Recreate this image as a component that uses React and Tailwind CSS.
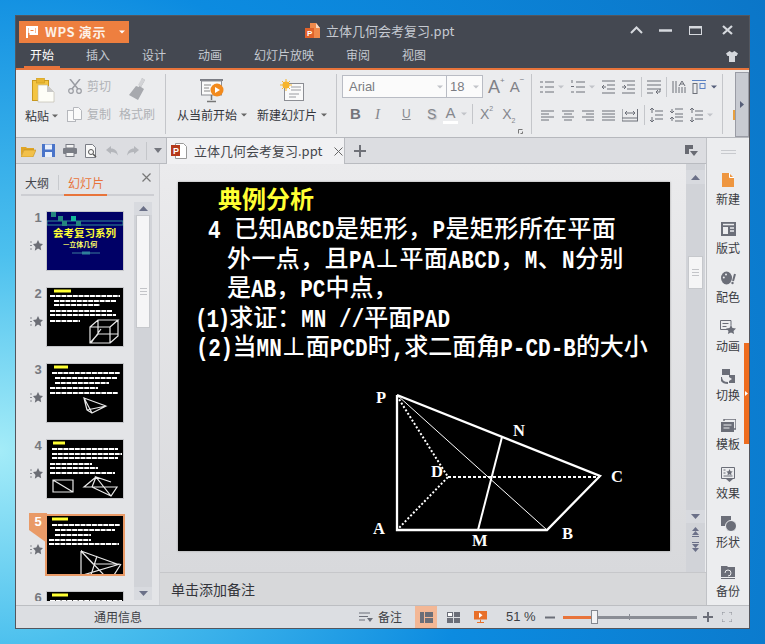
import React from "react";

const G = "#6d7079";
const cjk = "font-['Noto_Sans_CJK_SC','Liberation_Sans',sans-serif]";

function Sv({ w, h, className = "", children }) {
  return (
    <svg width={w} height={h} viewBox={`0 0 ${w} ${h}`} className={"block shrink-0 " + className}>
      {children}
    </svg>
  );
}

function Ln({ w = 14, h = 14, d, c = G, sw = 1, className = "" }) {
  return (
    <Sv w={w} h={h} className={className}>
      <path d={d} stroke={c} strokeWidth={sw} fill="none" />
    </Sv>
  );
}

function Caret({ c = "#c2c4c9", className = "" }) {
  return (
    <Sv w={6} h={4} className={className}>
      <path d="M0 0.5h6L3 3.5z" fill={c} />
    </Sv>
  );
}

function Sep({ className = "" }) {
  return <div className={"w-px bg-[#c4c6ca] shrink-0 " + className} />;
}

function Titlebar() {
  return (
    <div className="h-[28px] bg-[#444851] flex items-center relative shrink-0">
      <div className="ml-[3px] mt-[3px] w-[110px] h-[22px] bg-[#ee7f3f] flex items-center text-white">
        <Sv w={12} h={12} className="ml-[7px]">
          <path d="M1 12V1h10v7H3.5M3.5 3v3h5V3z" fill="none" stroke="#fff" strokeWidth="2" />
        </Sv>
        <span className={`ml-[7px] text-[13px] font-bold tracking-[0.6px] text-[#fdf0e6] ${cjk}`}>WPS 演示</span>
        <Caret c="#fff" className="ml-[13px]" />
      </div>
      <div className="ml-[176px] mt-[1px] flex items-center">
        <Sv w={15} h={15}>
          <path d="M5 0h6l4 5v10H5z" fill="#f08a4b" />
          <path d="M11 0l4 5h-4z" fill="#fbd9c2" />
          <rect x="0" y="5" width="9" height="10" fill="#e0622a" />
          <text x="2" y="13" fontSize="8" fontWeight="700" fill="#fff" fontFamily="Liberation Sans">P</text>
        </Sv>
        <span className={`ml-[6px] text-[13px] leading-[18px] text-[#c6cad1] ${cjk}`}>立体几何会考复习.ppt</span>
      </div>
      <div className="ml-auto flex items-center mr-[16px]">
        <Ln w={13} h={8} d="M1 7l5.5-5.5L12 7" c="#d6d9de" sw={2} />
        <Ln w={13} h={3} d="M0 1.5h13" c="#d6d9de" sw={2.5} className="ml-[16px]" />
        <Sv w={13} h={9} className="ml-[17px]">
          <rect x="0.5" y="0.5" width="12" height="8" fill="none" stroke="#d6d9de" />
          <rect x="0" y="0" width="13" height="2.5" fill="#d6d9de" />
        </Sv>
        <Ln w={11} h={10} d="M1 1l9 8M10 1L1 9" c="#d6d9de" sw={2.2} className="ml-[20px]" />
      </div>
    </div>
  );
}

function Tabs() {
  const tabs = ["开始", "插入", "设计", "动画", "幻灯片放映", "审阅", "视图"];
  return (
    <div className="h-[26px] shrink-0 bg-[#444851] border-b-2 border-[#e8743b] flex items-end pl-[8px] relative">
      {tabs.map((t, i) => (
        <div
          key={t}
          className={
            `mr-[20px] px-[6px] h-[24px] pt-[2px] text-[12px] leading-[18px] ${cjk} ` +
            (i === 0 ? "text-white border-b-2 border-[#e8743b]" : "text-[#c6cad1]")
          }
        >
          {t}
        </div>
      ))}
      <Sv w={12} h={11} className="ml-auto mr-[11px] mb-[6px]">
        <path d="M3.5 0L0 2.5 1.5 5H3v6h6V5h1.5L12 2.5 8.5 0 6 1.5z" fill="#d5d8dd" />
      </Sv>
    </div>
  );
}

function Clipboard() {
  return (
    <div className="w-[149px] flex pt-[8px] shrink-0">
      <div className="w-[51px] flex flex-col items-center">
        <Sv w={23} h={25} className="ml-[3px]">
          <rect x="0.5" y="2.5" width="16" height="20" fill="#f4c542" stroke="#c9991f" />
          <rect x="4.5" y="0" width="8" height="5" fill="#e9b530" stroke="#c9991f" strokeWidth="0.6" />
          <path d="M6 7h9l7 7v10H6z" fill="#fdfdf7" stroke="#b9b6a5" strokeWidth="0.6" />
          <path d="M15 7l7 7h-7z" fill="#c9c9c9" />
        </Sv>
        <div className={`mt-[5px] flex items-center text-[12px] leading-[16px] text-[#33353b] whitespace-nowrap ${cjk}`}>
          粘贴
          <Caret c="#666" className="ml-[3px]" />
        </div>
      </div>
      <div className="flex flex-col -mt-[2px]">
        <div className="flex items-center h-[20px] ml-[1px]">
          <Sv w={14} h={15}>
            <path d="M2 0l8 10M12 0L4 10" stroke="#9a9ca2" strokeWidth="1.5" fill="none" />
            <circle cx="3" cy="12" r="2.3" fill="none" stroke="#9a9ca2" strokeWidth="1.2" />
            <circle cx="11" cy="12" r="2.3" fill="none" stroke="#9a9ca2" strokeWidth="1.2" />
          </Sv>
          <span className={`ml-[5px] text-[12px] text-[#b0b2b6] ${cjk}`}>剪切</span>
        </div>
        <div className="flex items-center h-[20px] mt-[8px]">
          <Sv w={15} h={15}>
            <rect x="0.5" y="3.5" width="8" height="11" fill="#fafafa" stroke="#b5b7bc" />
            <path d="M6.5 0.5h5l3 3v9h-8z" fill="#fafafa" stroke="#b5b7bc" />
          </Sv>
          <span className={`ml-[5px] text-[12px] text-[#b0b2b6] ${cjk}`}>复制</span>
        </div>
      </div>
      <div className="flex flex-col items-center ml-[8px] w-[36px]">
        <Sv w={21} h={23} className="ml-[2px]">
          <path d="M14 0l3 2-4 7 3 2-6 11-9-5 7-9 3 1z" fill="#a7a9ae" />
          <path d="M14 0l3 2-4 7-3-2z" fill="#d2d3d6" />
        </Sv>
        <span className={`mt-[4px] text-[12px] leading-[17px] text-[#b0b2b6] whitespace-nowrap ${cjk}`}>格式刷</span>
      </div>
    </div>
  );
}

function Slides() {
  return (
    <div className="w-[170px] flex pt-[8px] shrink-0 pl-[10px]">
      <div className="flex flex-col items-center w-[72px]">
        <Sv w={25} h={24} className="mt-[1px]">
          <rect x="0" y="0" width="23" height="2" fill="#7b7d84" />
          <rect x="1.5" y="2" width="20" height="14" fill="#fafafa" stroke="#8b8d93" />
          <path d="M4 6h7M4 9h5M4 12h6" stroke="#888" fill="none" />
          <path d="M11.5 16v5M7 22.5h9" stroke="#777" strokeWidth="1.5" fill="none" />
          <circle cx="17" cy="11" r="6.5" fill="#f28a1d" />
          <path d="M15 8l5 3-5 3z" fill="#fff" />
        </Sv>
        <div className={`mt-[4px] flex items-center text-[12px] leading-[16px] text-[#33353b] whitespace-nowrap ${cjk}`}>
          从当前开始
          <Caret c="#666" className="ml-[4px]" />
        </div>
      </div>
      <div className="flex flex-col items-center w-[72px] ml-[8px]">
        <Sv w={24} h={22} className="mt-[1px]">
          <rect x="4.5" y="4.5" width="19" height="17" fill="#fafafa" stroke="#8b8d93" />
          <path d="M11 8h10M11 11h10M9 15h10M9 18h7" stroke="#9a9ca1" fill="none" />
          <circle cx="6" cy="6" r="3.5" fill="#f6b42c" />
          <path d="M6 0v12M0 6h12M2 2l8 8M10 2l-8 8" stroke="#f6b42c" fill="none" />
        </Sv>
        <div className={`mt-[6px] flex items-center text-[12px] leading-[16px] text-[#33353b] whitespace-nowrap ${cjk}`}>
          新建幻灯片
          <Caret c="#666" className="ml-[4px]" />
        </div>
      </div>
    </div>
  );
}

function FontGroup() {
  const tx = "font-['Liberation_Sans',sans-serif]";
  return (
    <div className="w-[194px] shrink-0 pt-[5px]">
      <div className="flex items-center h-[23px] ml-[5px]">
        <div className="w-[105px] h-[23px] bg-[#fbfbfb] border border-[#b9bcc4] flex items-center pl-[6px]">
          <span className={`text-[13px] text-[#7a7c82] ${tx}`}>Arial</span>
          <Caret className="ml-auto mr-[3px]" />
        </div>
        <div className="w-[37px] h-[23px] -ml-px bg-[#fbfbfb] border border-[#b9bcc4] flex items-center pl-[3px]">
          <span className={`text-[13px] text-[#7a7c82] ${tx}`}>18</span>
          <Caret className="ml-auto mr-[3px]" />
        </div>
        <div className={`ml-[5px] flex items-start text-[#7f8187] ${tx}`}>
          <span className="text-[18px] leading-[20px]">A</span>
          <span className="text-[8px] leading-[8px]">+</span>
        </div>
        <div className={`ml-[5px] flex items-start text-[#7f8187] ${tx}`}>
          <span className="text-[15px] leading-[20px] mt-[1px]">A</span>
          <span className="text-[8px] leading-[8px]">−</span>
        </div>
      </div>
      <div className={`flex items-center h-[22px] mt-[5px] text-[#85878d] ${tx}`}>
        <span className="ml-[13px] w-[11px] text-[15px] font-bold text-[#73757b]">B</span>
        <span className="ml-[14px] w-[6px] text-[15px] italic font-['Liberation_Serif',serif]">I</span>
        <span className="ml-[21px] w-[10px] text-[12px] underline">U</span>
        <span className="ml-[15px] w-[10px] text-[14px] [text-shadow:1px_1px_1px_#bbb]">S</span>
        <div className="ml-[6px] w-[15px] flex flex-col items-center">
          <span className="text-[15px] leading-[16px]">A</span>
          <div className="w-[15px] h-[3px] bg-white" />
        </div>
        <Caret className="ml-[3px]" />
        <Sep className="h-[20px] ml-[5px] bg-[#c4c6ca]" />
        <span className="ml-[7px] text-[14px] leading-[18px]">X</span>
        <span className="text-[7px] leading-[7px] self-start mt-[2px]">2</span>
        <span className="ml-[9px] text-[14px] leading-[18px]">X</span>
        <span className="text-[7px] leading-[7px] self-end mb-[1px]">2</span>
      </div>
      <Ln w={5} h={5} d="M0.5 4.5v-4h4M2.5 4.5h2v-2" c="#777" className="ml-[181px] mt-[4px]" />
    </div>
  );
}

function ParaGroup() {
  return (
    <div className="w-[190px] shrink-0 pt-[9px]">
      <div className="flex items-center h-[16px]">
        <Ln d="M5 2h9M5 7h9M5 12h9M0 2h3M0 7h3M0 12h3" className="ml-[8px]" />
        <Caret className="ml-[4px]" />
        <Ln d="M5 2h9M5 7h9M5 12h9M1 0v3M0 6.5h3M0 12h3" className="ml-[7px]" />
        <Caret className="ml-[4px]" />
        <Ln d="M0 1h13M5 5h8M5 9h8M0 13h13M4 7H0m2-2L0 7l2 2" className="ml-[7px]" />
        <Ln d="M0 1h13M5 5h8M5 9h8M0 13h13M0 7h4m-2-2l2 2-2 2" className="ml-[6px]" />
        <Sep className="h-[20px] ml-[5px]" />
        <Ln d="M0 1h14M0 5h14M0 9h14M0 13h6M13 9v3H9m2-2l-2 2 2 2" className="ml-[5px]" />
        <Sep className="h-[20px] ml-[5px]" />
        <Ln w={15} d="M1 1v12M4 1v12M7 7v6M10 7v6M13 7v6M7 6l3-5 3 5M8 4h4" className="ml-[5px]" />
        <Sv w={14} h={14} className="ml-[5px]">
          <path d="M0 0.5h14" stroke="#5b82c4" />
          <rect x="1" y="3.5" width="4" height="10" fill="none" stroke={G} />
          <rect x="8" y="3.5" width="5" height="5" fill="none" stroke="#5b82c4" />
        </Sv>
        <Caret c="#555e7a" className="ml-[5px]" />
      </div>
      <div className="flex items-center h-[16px] mt-[12px]">
        <Ln w={13} d="M0 3h13M0 6h8M0 9h13M0 12h8" className="ml-[9px]" />
        <Ln w={12} d="M0 3h12M2 6h8M0 9h12M2 12h8" className="ml-[8px]" />
        <Ln w={12} d="M0 3h12M4 6h8M0 9h12M4 12h8" className="ml-[8px]" />
        <Ln w={13} d="M0 3h13M0 6h13M0 9h13M0 12h13" className="ml-[8px]" />
        <Ln w={16} d="M0 1v12M15.5 1v12M0 10h16M0 13h16M3 5h10M5 3L3 5l2 2M11 3l2 2-2 2" className="ml-[7px]" />
        <Sep className="h-[20px] ml-[6px]" />
        <Ln d="M6 3h8M6 7h8M6 11h8M3 0v5M1 2l2-2 2 2M3 9v5M1 12l2 2 2-2" className="ml-[4px]" />
        <Ln d="M6 1h8M6 6h8M6 9h8M6 13h8M3 1v4M1 3l2 2 2-2M3 9v4M1 11l2-2 2 2" className="ml-[6px]" />
        <Ln d="M6 3h8M6 7h8M6 11h8M3 0v5M1 2l2-2 2 2M3 9v5M1 12l2 2 2-2" className="ml-[6px]" />
        <Caret className="ml-[4px]" />
      </div>
    </div>
  );
}

function Ribbon() {
  return (
    <div className="h-[68px] shrink-0 bg-[#ebecee] border-b border-[#b6b8bd] flex">
      <Clipboard />
      <Sep className="h-[60px] mt-[4px]" />
      <Slides />
      <Sep className="h-[60px] mt-[4px]" />
      <FontGroup />
      <Sep className="h-[60px] mt-[4px]" />
      <ParaGroup />
      <Sep className="h-[60px] mt-[4px]" />
      <div className="w-[12px] shrink-0 overflow-hidden">
        <div className="ml-[10px] mt-[40px] w-[2px] h-[10px] bg-[#e8a040]" />
      </div>
      <div className="w-[14px] h-[65px] mt-[2px] bg-[#c8cbd2] border border-[#9a9ca5] flex items-center justify-center shrink-0">
        <Sv w={4} h={7}>
          <path d="M0 0l4 3.5L0 7z" fill="#565e78" />
        </Sv>
      </div>
    </div>
  );
}

function QuickBar() {
  return (
    <div className="h-[26px] shrink-0 flex bg-[#dcdde1] border-b border-[#b9bbc0]">
      <div className="w-[151px] flex items-center pl-[5px] border-r border-[#b9bbc0] shrink-0">
        <Sv w={15} h={12}>
          <path d="M0 2h5l1 1h7v2H3L0 11z" fill="#e0a526" />
          <path d="M3 5h12l-3 7H0z" fill="#f2c04a" stroke="#b98612" strokeWidth="0.5" />
        </Sv>
        <Sv w={13} h={13} className="ml-[6px]">
          <rect width="13" height="13" fill="#4a74c9" />
          <rect x="3" y="0.5" width="7" height="5" fill="#eaf0fb" />
          <rect x="3" y="8" width="7" height="5" fill="#eaf0fb" />
        </Sv>
        <Sv w={14} h={13} className="ml-[8px]">
          <rect x="3" y="0.5" width="8" height="3.5" fill="#f3f3f3" stroke="#7a7d85" />
          <rect x="0" y="4" width="14" height="6" rx="1" fill="#7a7d85" />
          <rect x="3" y="8.5" width="8" height="4" fill="#f3f3f3" stroke="#7a7d85" />
        </Sv>
        <Sv w={13} h={14} className="ml-[8px]">
          <path d="M0.5 0.5h7l3 3v10h-10z" fill="#f8f8f8" stroke="#7a7d85" />
          <circle cx="6" cy="8" r="2.5" fill="none" stroke="#555" />
          <path d="M8 10l3 3" stroke="#555" strokeWidth="1.4" />
        </Sv>
        <Sv w={12} h={10} className="ml-[8px]">
          <path d="M0 4l5-4v2.5c4 0 6 2 7 7-2-3-4-3.5-7-3.5V8z" fill="#b4b6bb" />
        </Sv>
        <Sv w={12} h={10} className="ml-[9px]">
          <path d="M12 4L7 0v2.5C3 2.500 1 4.500 0 9.500c2-3 4-3.500 7-3.500V8z" fill="#b4b6bb" />
        </Sv>
        <Sep className="h-[18px] ml-[7px] bg-[#bfc1c6]" />
        <Sv w={8} h={5} className="ml-[7px]">
          <path d="M0 0h8L4 5z" fill="#74767e" />
        </Sv>
      </div>
      <div className="w-[178px] h-[26px] bg-[#f1f1f3] flex items-center pl-[4px] shrink-0 border-r border-[#b9bbc0]">
        <Sv w={16} h={16}>
          <path d="M4.500 0.500h8l3 3v12h-11z" fill="#fff" stroke="#999" />
          <rect x="0" y="2" width="9" height="11" fill="#b5391a" />
          <text x="2" y="11" fontSize="9" fontWeight="700" fill="#fff" fontFamily="Liberation Sans">P</text>
        </Sv>
        <span className={`ml-[7px] text-[13px] text-[#44464c] whitespace-nowrap ${cjk}`}>立体几何会考复习.ppt</span>
        <Ln w={9} h={9} d="M0.500 0.500l8 8M8.500 0.500l-8 8" c="#666" className="ml-[12px]" />
      </div>
      <Ln w={12} h={12} d="M6 0v12M0 6h12" c="#6f7178" sw={2} className="ml-[9px] self-center" />
      <Sv w={13} h={11} className="ml-auto mr-[8px] self-center">
        <path d="M0 0h8v4H4v5H0z" fill="#686a72" />
        <path d="M5 6h8l-4 5z" fill="#686a72" />
      </Sv>
    </div>
  );
}

function Dashes({ lines }) {
  return lines.map(([x, y, w, c], i) => (
    <path key={i} d={`M${x} ${y}h${w}`} stroke={c || "#fff"} strokeWidth={c ? 3 : 2} strokeDasharray={c ? "none" : "5 0.7"} fill="none" />
  ));
}

function ThumbArt({ n }) {
  if (n === 1)
    return (
      <svg width="76" height="58" viewBox="0 0 76 58" className="block" fontFamily="Noto Sans CJK SC">
        <rect width="76" height="58" fill="#000066" />
        <path d="M0 9h76v4H0z" fill="none" stroke="#2e8a96" />
        {[[4, 0], [11, 4], [24, 4], [15, 9], [29, 9]].map(([x, y], i) => (
          <rect key={i} x={x} y={y} width="5" height="5" fill={i === 2 ? "#12b69a" : "#25867e"} />
        ))}
        <text x="6" y="25" fontSize="10.500" fontWeight="700" fill="#ffff33">会考复习系列</text>
        <text x="16" y="35" fontSize="7" fontWeight="700" fill="#ffff66">—立体几何</text>
        <path d="M25 41h28" stroke="#3a7a99" />
        <rect x="35" y="39.500" width="8" height="3" fill="#2e7f99" />
      </svg>
    );
  const data = {
    2: [[[7, 3, 17, "#ffff33"], [3, 8, 70], [7, 13, 62], [7, 17, 46], [3, 23, 62], [3, 27, 66], [3, 33, 30]],
      "M43 55V39h20v16zM43 39l8-7h20l-8 7M71 32v16l-8 7M44 55l10-14M51 32v14h20M43 55l8-9"],
    3: [[[7, 3, 14, "#ffff33"], [5, 9, 68], [8, 14, 62], [8, 19, 54], [3, 24, 48], [3, 29, 68]],
      "M37 34l8 15 14-7zM37 34l22 8M40 46l19-4M37 34l3 12M40 46l5 3"],
    4: [[[6, 3, 12, "#ffff33"], [5, 9, 66], [5, 14, 70], [5, 18, 66], [3, 24, 42], [3, 28, 48], [3, 33, 65]],
      "M6 40h20v12H6zM6 40l20 12M49 37l-12 10 33 0-6 9-15-19 15 5M49 37l-4 10 19 9"],
    5: [[[5, 3, 16, "#ffff33"], [5, 9, 68], [8, 14, 60], [8, 19, 36], [2, 24, 42], [2, 28, 70]],
      "M34 35v24M34 35l36 13M36 59l37-11M34 35l23 24h10l7-11M44 59l6-19M34 35l12 13h26"],
    6: [[[5, 3, 16, "#ffff33"], [3, 9, 72]], ""],
  }[n];
  return (
    <svg width="76" height="58" viewBox="0 0 76 58" className="block">
      <rect width="76" height="58" fill="#000" />
      <Dashes lines={data[0]} />
      <path d={data[1]} stroke="#e8e8e8" strokeWidth="1.200" fill="none" />
    </svg>
  );
}

function Star() {
  return (
    <Sv w={13} h={13}>
      <path d="M8 1l1.700 3.600 3.300.4-2.500 2.500.7 3.700L8 9.500 4.800 11.700l.7-3.700L3 5l3.300-.4z" fill="#6b6d75" />
      <path d="M0 3h2M0 6.500h2M0 10h2" stroke="#8a8c93" />
    </Sv>
  );
}

function ThumbRow({ n }) {
  const sel = n === 5;
  return (
    <div className="flex h-[60px] mb-[16px] relative">
      {sel && (
        <svg width="18" height="32" viewBox="0 0 18 32" className="absolute left-[13px] -top-[2px]">
          <path d="M0 0h18v30L0 17z" fill="#e99a67" />
        </svg>
      )}
      <div className="w-[30px] shrink-0 flex flex-col items-end relative">
        <span
          className={
            "w-[10px] mr-[3px] text-[13px] leading-[14px] font-bold text-center font-['Liberation_Sans',sans-serif] " +
            (sel ? "text-white" : "text-[#777980]")
          }
        >
          {n}
        </span>
        <div className="mt-[14px] mr-[3px]">
          <Star />
        </div>
      </div>
      <div className={"shrink-0 " + (sel ? "border-2 border-[#e99a67] -mt-px -ml-px w-[80px] h-[62px]" : "border border-[#c4c5c9] w-[78px] h-[60px]")}>
        <ThumbArt n={n} />
      </div>
    </div>
  );
}

function TriUp() {
  return (
    <Sv w={9} h={5}>
      <path d="M0 5h9L4.500 0z" fill="#6b7088" />
    </Sv>
  );
}
function TriDown() {
  return (
    <Sv w={9} h={5}>
      <path d="M0 0h9L4.500 5z" fill="#6b7088" />
    </Sv>
  );
}

function LeftPanel() {
  return (
    <div className="w-[144px] shrink-0 bg-[#e3e4e7] border-r border-[#cfd0d4] flex flex-col overflow-hidden">
      <div className="h-[32px] shrink-0 relative px-[5px]">
        <div className={`flex items-center h-[30px] pl-[4px] text-[12px] ${cjk}`}>
          <span className="text-[#44464c] mt-[7px]">大纲</span>
          <div className="w-px h-[15px] bg-[#c8cace] ml-[9px] mt-[7px]" />
          <span className="text-[#e8743b] ml-[9px] mt-[7px]">幻灯片</span>
          <Ln w={9} h={9} d="M0.500 0.500l8 8M8.500 0.500l-8 8" c="#777" sw={1.2} className="ml-auto mr-[3px] mb-[4px]" />
        </div>
        <div className="h-[2px] bg-[#cdced3] w-[133px] flex">
          <div className="ml-[43px] w-[43px] bg-[#e8743b]" />
        </div>
      </div>
      <div className="flex h-[405px]">
        <div className="w-[118px] shrink-0 overflow-hidden pt-[15px]">
          {[1, 2, 3, 4, 5, 6].map((n) => (
            <ThumbRow key={n} n={n} />
          ))}
        </div>
        <div className="w-[18px] h-[398px] mt-[6px] bg-[#d1d3d8] flex flex-col items-center shrink-0">
          <div className="h-[13px] w-full flex items-center justify-center bg-[#d8dadf]">
            <TriUp />
          </div>
          <div className="w-[14px] h-[113px] bg-[#f5f5f6] border border-[#c6c8cc] flex flex-col items-center justify-center gap-[2px] pt-[40px]">
            <div className="w-[7px] h-px bg-[#c3c4c8]" />
            <div className="w-[7px] h-px bg-[#c3c4c8]" />
            <div className="w-[7px] h-px bg-[#c3c4c8]" />
          </div>
          <div className="mt-auto h-[13px] w-full flex items-center justify-center bg-[#d8dadf]">
            <TriDown />
          </div>
        </div>
      </div>
    </div>
  );
}

function M({ t = "", children }) {
  return (
    <span className={"inline-block scale-y-[1.25] font-['Liberation_Mono',monospace] text-[21px] font-bold " + t}>
      {children}
    </span>
  );
}

function SlideLine({ className = "", children }) {
  return <div className={"h-[29.400px] leading-[29.400px] whitespace-nowrap " + className}>{children}</div>;
}

function Diagram() {
  const f = { fontFamily: "Liberation Serif", fontWeight: 700, fontSize: 16.500, fill: "#fff" };
  return (
    <svg width="280" height="168" viewBox="358 382 280 168" className="block ml-[180px] mt-[22px]">
      <g stroke="#fff" fill="none">
        <path d="M397 396V531H547L600 477L397 396" strokeWidth="2.300" />
        <path d="M397 396L547 531" strokeWidth="1" />
        <path d="M478 531L502 438" strokeWidth="2" />
        <path d="M397 397L448 478L397 531" strokeWidth="2" strokeDasharray="2 2" />
        <path d="M448 478H600" strokeWidth="2" strokeDasharray="3 2" />
      </g>
      <text x="376" y="404" {...f}>P</text>
      <text x="513" y="437" {...f}>N</text>
      <text x="431" y="478" {...f}>D</text>
      <text x="611" y="483" {...f}>C</text>
      <text x="373" y="535" {...f}>A</text>
      <text x="562" y="540" {...f}>B</text>
      <text x="472" y="547" {...f}>M</text>
    </svg>
  );
}

function Slide() {
  return (
    <div className={`w-[492px] h-[369px] bg-black shadow-[0_0_2px_#999] text-white text-[24px] font-medium pt-[1px] overflow-hidden ${cjk}`}>
      <SlideLine className="ml-[40px] text-[#ffff33] font-bold">典例分析</SlideLine>
      <SlideLine className="ml-[30px] tracking-[0.4px]">
        <M>4</M>
        <span className="ml-[13px]">已知</span>
        <M>ABCD</M>是矩形，<M>P</M>是矩形所在平面
      </SlideLine>
      <SlideLine className="ml-[49px] tracking-[0.4px]">
        外一点，且<M>PA</M>⊥平面<M>ABCD</M>，<M>M</M>、<M>N</M>分别
      </SlideLine>
      <SlideLine className="ml-[49px]">
        是<M>AB</M>，<M>PC</M>中点，
      </SlideLine>
      <SlideLine className="ml-[17px]">
        <M t="tracking-[-1.200px]">(1)</M>求证：<M>MN //</M>平面<M>PAD</M>
      </SlideLine>
      <SlideLine className="ml-[18px]">
        <M t="tracking-[-0.400px]">(2)</M>当<M>MN</M>⊥面<M>PCD</M>时<M>,</M>求二面角<M>P-CD-B</M>的大小
      </SlideLine>
      <Diagram />
    </div>
  );
}

function SlideArea() {
  return (
    <div className="flex-1 flex flex-col min-w-0">
      <div className="h-[408px] flex shrink-0">
        <div className="w-[526px] shrink-0 bg-gradient-to-b from-[#ebebed] to-[#d8d9dc] pl-[18px] pt-[18px]">
          <Slide />
        </div>
        <div className="w-[19px] shrink-0 bg-[#d1d3d8] flex flex-col items-center pt-[6px]">
          <div className="w-full h-[14px] flex items-center justify-center bg-[#d8dadf]">
            <TriUp />
          </div>
          <div className="w-[15px] h-[33px] mt-[72px] bg-[#f5f5f6] border border-[#c6c8cc] flex flex-col items-center justify-center gap-[2px]">
            <div className="w-[7px] h-px bg-[#c3c4c8]" />
            <div className="w-[7px] h-px bg-[#c3c4c8]" />
            <div className="w-[7px] h-px bg-[#c3c4c8]" />
          </div>
          <div className="mt-[221px] w-full h-[13px] flex items-center justify-center bg-[#d8dadf]">
            <TriDown />
          </div>
          <Sv w={9} h={10} className="mt-[4px]">
            <path d="M4.500 0L8 4H1zM4.500 4L8 8H1z" fill="#6b7088" />
            <path d="M1 9.500h7" stroke="#6b7088" />
          </Sv>
          <Sv w={9} h={10} className="mt-[5px]">
            <path d="M1 0.500h7" stroke="#6b7088" />
            <path d="M1 2h7L4.500 6zM1 6h7L4.500 10z" fill="#6b7088" />
          </Sv>
        </div>
      </div>
      <div className={`flex-1 bg-[#d7d8da] border-t border-[#c6c7ca] pl-[11px] pt-[6px] text-[14px] leading-[20px] text-[#33353b] ${cjk}`}>
        单击添加备注
      </div>
    </div>
  );
}

function SideItem({ label, children }) {
  return (
    <div className="h-[49px] shrink-0 flex flex-col items-center">
      <div className="h-[20px] flex items-center justify-center">{children}</div>
      <span className={`mt-[1px] text-[12px] leading-[16px] text-[#3a3c42] ${cjk}`}>{label}</span>
    </div>
  );
}

function Sidebar() {
  return (
    <div className="w-[43px] shrink-0 bg-[#ecedef] border-l border-[#c0c2c6] flex flex-col relative overflow-hidden">
      <div className="pt-[12px] pb-[16px] flex flex-col items-center gap-[2px] shrink-0">
        <div className="w-[15px] h-px bg-[#c8cace]" />
        <div className="w-[15px] h-px bg-[#c8cace]" />
      </div>
      <SideItem label="新建">
        <Sv w={12} h={14}>
          <path d="M0 0h7l5 5v9H0z" fill="#ee9640" />
          <path d="M7.500 0v4.500H12" fill="none" stroke="#fff" />
        </Sv>
      </SideItem>
      <SideItem label="版式">
        <Sv w={15} h={14}>
          <rect width="15" height="14" fill="#6b6e78" />
          <rect x="2" y="5" width="5" height="7" fill="#ecedef" />
          <path d="M9 6h4M9 9h4" stroke="#ecedef" strokeWidth="1.500" />
          <rect x="2" y="1.800" width="11" height="1.500" fill="#ecedef" />
        </Sv>
      </SideItem>
      <SideItem label="配色">
        <Sv w={15} h={14}>
          <ellipse cx="5.500" cy="7" rx="5.500" ry="6.500" fill="#6b6e78" />
          <circle cx="5" cy="3.500" r="1" fill="#ecedef" />
          <circle cx="2.800" cy="6.500" r="1" fill="#ecedef" />
          <path d="M14 3l-2 7" stroke="#6b6e78" strokeWidth="2" />
          <circle cx="11.500" cy="12" r="1.200" fill="#6b6e78" />
        </Sv>
      </SideItem>
      <SideItem label="动画">
        <Sv w={16} h={14}>
          <path d="M10 9.500H0.500V0.500H11v5M2.500 3.500h6M2.500 6.500h4" stroke="#6b6e78" fill="none" />
          <path d="M11 5l1.500 3 3.500.5-2.500 2.500.6 3L11 12.500 7.900 14l.6-3L6 8.500 9.500 8z" fill="#6b6e78" />
        </Sv>
      </SideItem>
      <SideItem label="切换">
        <Sv w={14} h={15}>
          <rect x="1" y="0" width="8" height="6" fill="#6b6e78" />
          <path d="M0 8c0 4 3 6 7 6" stroke="#6b6e78" strokeWidth="2" fill="none" />
          <path d="M8 6h6v8H8z" fill="#6b6e78" />
          <path d="M8 8l3 2-3 2z" fill="#ecedef" />
        </Sv>
      </SideItem>
      <SideItem label="模板">
        <Sv w={15} h={13}>
          <path d="M3 2V0h12v10h-2" stroke="#6b6e78" fill="none" strokeWidth="1.400" />
          <rect x="0" y="3" width="13" height="10" fill="#6b6e78" />
          <path d="M2.500 6h8M2.500 9h6" stroke="#ecedef" />
        </Sv>
      </SideItem>
      <SideItem label="效果">
        <Sv w={14} h={15}>
          <path d="M0.500 0.500h13v11h-13zM2.500 3h2M2.500 6h2M2.500 9h9" stroke="#6b6e78" fill="none" />
          <path d="M8.500 2l1 2.200 2.200.3-1.600 1.600.4 2.200-2-1-2 1 .4-2.200L5.300 4.500l2.200-.3z" fill="#6b6e78" />
          <path d="M5 12h7l-3.500 3z" fill="#6b6e78" />
        </Sv>
      </SideItem>
      <SideItem label="形状">
        <Sv w={15} h={15}>
          <rect width="10" height="10" fill="#6b6e78" />
          <circle cx="10" cy="10" r="5.500" fill="#6b6e78" stroke="#ecedef" />
        </Sv>
      </SideItem>
      <SideItem label="备份">
        <Sv w={14} h={14}>
          <path d="M0 1h6l1 1h7v10H0z" fill="#6b6e78" />
          <path d="M4 8a3 3 0 1 1 3 3" fill="none" stroke="#ecedef" />
          <path d="M0 13.500h14" stroke="#6b6e78" />
        </Sv>
      </SideItem>
      <div className="absolute right-0 top-[205px] w-[5px] h-[101px] bg-[#ee6c1e] flex items-center justify-center">
        <Sv w={3} h={5}>
          <path d="M0 0l3 2.500L0 5z" fill="#fff" />
        </Sv>
      </div>
    </div>
  );
}

function StatusBar() {
  return (
    <div className={`h-[23px] shrink-0 bg-[#dcdee2] border-t border-[#bcbec2] flex items-center text-[12px] text-[#3d3f45] ${cjk}`}>
      <span className="ml-[78px] w-[48px] whitespace-nowrap">通用信息</span>
      <Sv w={14} h={10} className="ml-[217px]">
        <path d="M0 1h11M0 4.500h9M0 8h6" stroke="#6b6e78" fill="none" />
        <path d="M8 6h6l-3 4z" fill="#6b6e78" />
      </Sv>
      <span className="ml-[5px] w-[24px] whitespace-nowrap">备注</span>
      <div className="ml-[13px] w-[22px] h-full bg-[#f3b795] flex items-center justify-center">
        <Sv w={13} h={11}>
          <rect width="4" height="11" fill="#6b6e78" />
          <rect x="5" width="8" height="5" fill="#6b6e78" />
          <rect x="5" y="6" width="8" height="5" fill="#6b6e78" />
        </Sv>
      </div>
      <Sv w={13} h={11} className="ml-[10px]">
        <rect x="0.500" y="0.500" width="5" height="4" fill="#fff" stroke="#6b6e78" />
        <rect x="7" width="6" height="5" fill="#6b6e78" />
        <rect y="6" width="6" height="5" fill="#6b6e78" />
        <rect x="7" y="6" width="6" height="5" fill="#6b6e78" />
      </Sv>
      <Sv w={13} h={12} className="ml-[14px]">
        <rect width="13" height="8.500" fill="#e8702a" />
        <path d="M5 1.500l3.500 2.700L5 7z" fill="#fff" />
        <path d="M6.500 8.500v2.500M3 11.500h7" stroke="#e8702a" fill="none" />
      </Sv>
      <span className="ml-[19px] w-[29px] whitespace-nowrap font-['Liberation_Sans',sans-serif] text-[13px]">51 %</span>
      <Ln w={10} h={3} d="M0 1.500h10" c="#6b6e78" sw={2} className="ml-[10px]" />
      <div className="ml-[8px] w-[134px] h-[3px] bg-[#8a8d95] relative shrink-0">
        <div className="w-[29px] h-[3px] bg-[#e8743b]" />
        <div className="absolute left-[66px] -top-[2px] w-px h-[6px] bg-[#8a8d95]" />
        <div className="absolute left-[28px] -top-[6px] w-[7px] h-[14px] bg-[#f3f3f4] border border-[#85888f]" />
      </div>
      <Ln w={10} h={10} d="M5 0v10M0 5h10" c="#6b6e78" sw={2} className="ml-[6px]" />
      <Ln w={10} h={10} d="M0 3V0h3M7 0h3v3M10 7v3H7M3 10H0V7" c="#8a8d95" className="ml-[9px]" />
    </div>
  );
}

export default function App() {
  return (
    <div className="w-[765px] h-[644px] overflow-hidden pl-[15px] pt-[15px] bg-[#0b7bd0] bg-[radial-gradient(circle_at_0%_70%,#a4ecf8_0%,#4cc0ee_22%,#0c8be0_55%,#0b76c8_100%)]">
      <div className="w-[735px] h-[614px] border border-[#53565e] flex flex-col bg-[#ebecee]">
        <Titlebar />
        <Tabs />
        <Ribbon />
        <div className="flex h-[467px] shrink-0">
          <div className="w-[690px] shrink-0 flex flex-col">
            <QuickBar />
            <div className="flex h-[441px]">
              <LeftPanel />
              <SlideArea />
            </div>
          </div>
          <Sidebar />
        </div>
        <StatusBar />
      </div>
    </div>
  );
}
